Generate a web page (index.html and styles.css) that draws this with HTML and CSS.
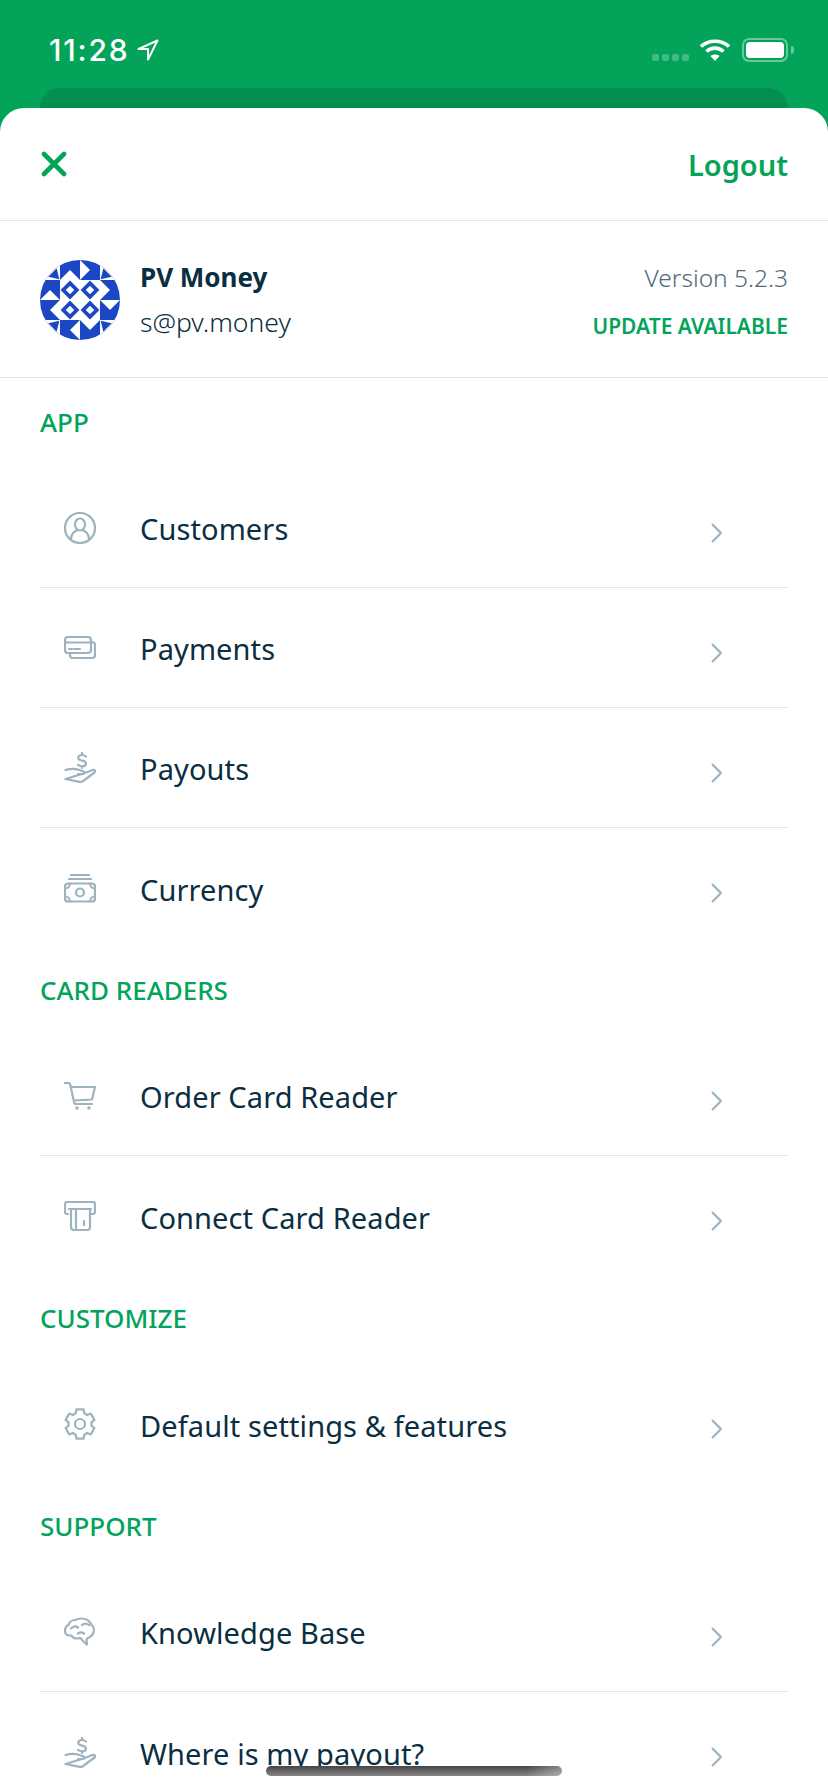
FILE: index.html
```html
<!DOCTYPE html>
<html lang="en">
<head>
  <meta charset="UTF-8" />
  <meta name="viewport" content="width=device-width, initial-scale=1" />
  <title>Menu</title>
  <link rel="stylesheet" href="styles.css">
</head>
<body>

  <!-- status bar -->
  <div class="status">
    <div class="status-time">
      <span>11:28</span>
      <svg class="loc" width="22" height="22" viewBox="0 0 22 22"><path d="M20.500 1.500 1.500 10h9.500v10.500z" fill="none" stroke="#fff" stroke-width="2" stroke-linejoin="round"/></svg>
    </div>
    <div class="status-right">
      <div class="signal"><i></i><i></i><i></i><i></i></div>
      <svg class="wifi" width="32" height="24" viewBox="0 0 32 24">
        <path d="M2 8.500C9.500 1.500 22.500 1.500 30 8.500" fill="none" stroke="#fff" stroke-width="3.600"/>
        <path d="M7.500 13.500c5-4.500 12-4.500 17 0" fill="none" stroke="#fff" stroke-width="3.600"/>
        <path d="M11.500 18c2.700-2 6.300-2 9 0L16 23z" fill="#fff"/>
      </svg>
      <div class="battery"><div class="battery-fill"></div></div>
      <div class="battery-tip"></div>
    </div>
  </div>
  <div class="peek"></div>

  <div class="sheet">
    <div class="sheet-top">
      <svg class="close" width="26" height="26" viewBox="0 0 26 26"><path d="M3 3l20 20M23 3 3 23" stroke="#03a45a" stroke-width="4.600" stroke-linecap="round"/></svg>
      <a class="logout">Logout</a>
    </div>

    <div class="profile">
      <svg class="avatar" width="80" height="80" viewBox="0 0 240 240">
        <defs>
          <clipPath id="round"><circle cx="120" cy="120" r="120"/></clipPath>
          <g id="quad">
            <rect x="0" y="0" width="60" height="60" fill="#fff"/>
            <path d="M50 25l8 33-33-8z" fill="#1b47c4"/>
            <path d="M60 60l30-30 30 30z" fill="#fff"/>
            <path d="M120 0l30 30-30 30z" fill="#fff"/>
            <rect x="60" y="60" width="60" height="60" fill="#fff"/>
            <path d="M90 69.500l20.500 20.500-20.500 20.500-20.500-20.500z" fill="none" stroke="#1b47c4" stroke-width="11"/>
          </g>
        </defs>
        <g clip-path="url(#round)">
          <rect width="240" height="240" fill="#1b47c4"/>
          <use href="#quad"/>
          <use href="#quad" transform="rotate(90 120 120)"/>
          <use href="#quad" transform="rotate(180 120 120)"/>
          <use href="#quad" transform="rotate(270 120 120)"/>
        </g>
      </svg>
      <div class="profile-info">
        <div class="profile-name">PV Money</div>
        <div class="profile-mail">s@pv.money</div>
      </div>
      <div class="profile-version">
        <div class="version">Version 5.2.3</div>
        <div class="update">UPDATE AVAILABLE</div>
      </div>
    </div>

    <div class="section-title">APP</div>
    <div class="list">
      <div class="row">
        <svg class="icon" width="32" height="32" viewBox="0 0 32 32"><circle cx="16" cy="16" r="15"/><ellipse cx="16" cy="12.500" rx="5" ry="6"/><path d="M7 27c0-5 3-7.500 6.500-9M25 27c0-5-3-7.500-6.500-9"/></svg>
        <span class="row-label">Customers</span>
        <svg class="chev" width="11" height="20" viewBox="0 0 11 20"><path d="M1 1l9 9-9 9"/></svg>
      </div>
      <div class="row">
        <svg class="icon" width="32" height="23" viewBox="0 0 32 23"><rect x="1" y="1" width="26" height="16" rx="3"/><path d="M1 6.500h26M5 13h3M10 13h6M27 6h1a3 3 0 0 1 3 3v10a3 3 0 0 1-3 3H9a3 3 0 0 1-3-3v-2"/></svg>
        <span class="row-label">Payments</span>
        <svg class="chev" width="11" height="20" viewBox="0 0 11 20"><path d="M1 1l9 9-9 9"/></svg>
      </div>
      <div class="row">
        <svg class="icon" width="32" height="31" viewBox="0 0 32 31"><path d="M22 4.500c-1-1-2.300-1.500-4-1.500-2.300 0-3.800 1-3.800 2.800S15.700 8.200 18 8.600s4 1.100 4 2.900-1.500 2.800-4 2.800c-1.700 0-3-.5-4-1.500M18 0v3M18 14v2"/><path d="M1.500 18c5-1.500 10-1.500 14 0l4 1.500c1.500.7 1 2.500-.5 2.500h-5M19.500 21.500l9-3.500c2-.8 3.500 1 2 2.500L18.500 29.500c-1 .5-2 .5-3 .3L1.500 27z"/></svg>
        <span class="row-label">Payouts</span>
        <svg class="chev" width="11" height="20" viewBox="0 0 11 20"><path d="M1 1l9 9-9 9"/></svg>
      </div>
      <div class="row row-last">
        <svg class="icon" width="32" height="29" viewBox="0 0 32 29"><path d="M7 1h18M5 5h22"/><rect x="1" y="9.500" width="30" height="18" rx="3"/><circle cx="16" cy="18.500" r="4"/><path d="M1 14.500a5 5 0 0 0 5-5M26 9.500a5 5 0 0 0 5 5M1 22.500a5 5 0 0 1 5 5M31 22.500a5 5 0 0 0-5 5"/></svg>
        <span class="row-label">Currency</span>
        <svg class="chev" width="11" height="20" viewBox="0 0 11 20"><path d="M1 1l9 9-9 9"/></svg>
      </div>
    </div>

    <div class="section-title">CARD READERS</div>
    <div class="list">
      <div class="row">
        <svg class="icon" width="32" height="28" viewBox="0 0 32 28"><path d="M0 1h4c1.200 0 2 .6 2.300 1.700L10 20c.2 1.300 1 2 2 2h16M6.500 5H31l-3 12.500-18 1"/><circle class="dot" cx="13" cy="26" r="1.800"/><circle class="dot" cx="25" cy="26" r="1.800"/></svg>
        <span class="row-label">Order Card Reader</span>
        <svg class="chev" width="11" height="20" viewBox="0 0 11 20"><path d="M1 1l9 9-9 9"/></svg>
      </div>
      <div class="row row-last">
        <svg class="icon" width="32" height="30" viewBox="0 0 32 30"><path d="M4 13H3a2 2 0 0 1-2-2V3a2 2 0 0 1 2-2h26a2 2 0 0 1 2 2v8a2 2 0 0 1-2 2h-2M5 8h22M7 8v18a3 3 0 0 0 3 3h13a3 3 0 0 0 3-3V8M12 8v21M20 20v4"/></svg>
        <span class="row-label">Connect Card Reader</span>
        <svg class="chev" width="11" height="20" viewBox="0 0 11 20"><path d="M1 1l9 9-9 9"/></svg>
      </div>
    </div>

    <div class="section-title">CUSTOMIZE</div>
    <div class="list">
      <div class="row row-last">
        <svg class="icon" width="32" height="32" viewBox="0 0 32 32"><polygon points="11.690,5.340 12.370,1.450 19.630,1.450 20.310,5.340 23.080,6.940 26.790,5.580 30.420,11.870 27.390,14.400 27.390,17.600 30.420,20.130 26.790,26.420 23.080,25.060 20.310,26.660 19.630,30.550 12.370,30.550 11.690,26.660 8.920,25.060 5.210,26.420 1.580,20.130 4.610,17.600 4.610,14.400 1.580,11.870 5.210,5.580 8.920,6.940"/><circle cx="16" cy="16" r="5"/></svg>
        <span class="row-label">Default settings &amp; features</span>
        <svg class="chev" width="11" height="20" viewBox="0 0 11 20"><path d="M1 1l9 9-9 9"/></svg>
      </div>
    </div>

    <div class="section-title">SUPPORT</div>
    <div class="list">
      <div class="row">
        <svg class="icon" width="32" height="30" viewBox="0 0 32 30"><path d="M23 21.500c4-1.500 7-4.500 7-9 0-2-1-3.500-2.500-4.500C26 4 22 1.500 17 1.500c-2.500 0-4 .5-5.500 1.500C8 3 5 5 4.500 8 2 9 1 11 1 13.500c0 3 2 5 5 5h1.500c1 2 3 3 5 3 2 0 3-.5 4-.5l3.500 4c1 1 2 2 3 2.500.5-1-.5-2.500-.5-3.500z"/><path d="M7 11.500c2-2.500 5-2.500 7-1M18 8c2-1.500 5-1.500 7 0M14 16.500c2-1.500 4-1.500 6 0"/></svg>
        <span class="row-label">Knowledge Base</span>
        <svg class="chev" width="11" height="20" viewBox="0 0 11 20"><path d="M1 1l9 9-9 9"/></svg>
      </div>
      <div class="row row-last">
        <svg class="icon" width="32" height="31" viewBox="0 0 32 31"><path d="M22 4.500c-1-1-2.300-1.500-4-1.500-2.300 0-3.800 1-3.800 2.800S15.700 8.200 18 8.600s4 1.100 4 2.900-1.500 2.800-4 2.800c-1.700 0-3-.5-4-1.500M18 0v3M18 14v2"/><path d="M1.500 18c5-1.500 10-1.500 14 0l4 1.500c1.500.7 1 2.500-.5 2.500h-5M19.500 21.500l9-3.500c2-.8 3.500 1 2 2.500L18.500 29.500c-1 .5-2 .5-3 .3L1.500 27z"/></svg>
        <span class="row-label">Where is my payout?</span>
        <svg class="chev" width="11" height="20" viewBox="0 0 11 20"><path d="M1 1l9 9-9 9"/></svg>
      </div>
    </div>
  </div>

  <div class="home-bar"></div>

</body>
</html>
```

FILE: styles.css
```css
html, body {
  margin: 0;
  padding: 0;
}

body {
  position: relative;
  width: 828px;
  height: 1792px;
  overflow: hidden;
  background: #03a45a;
  color: #0b2e42;
  font-family: "Noto Sans", "Open Sans", sans-serif;
}

.status {
  height: 88px;
  padding: 12px 34px 0 49px;
  box-sizing: border-box;
  display: flex;
  justify-content: space-between;
  align-items: center;
  color: white;
}

.status-time {
  display: flex;
  align-items: center;
  gap: 8px;
  font-family: Inter, sans-serif;
  font-size: 30px;
  font-weight: 500;
  letter-spacing: 1.8px;
}

.status-right {
  display: flex;
  align-items: center;
}

.signal {
  display: flex;
  gap: 3px;
  margin: 15px 10px 0 0;
}

.signal i {
  width: 7px;
  height: 7px;
  border-radius: 2px;
  background: rgba(255,255,255,0.25);
}

.wifi {
  margin-right: 11px;
}

.battery {
  width: 46px;
  height: 24px;
  box-sizing: border-box;
  padding: 2px;
  border: 2px solid rgba(255,255,255,0.4);
  border-radius: 7px;
}

.battery-fill {
  height: 100%;
  background: white;
  border-radius: 4px;
}

.battery-tip {
  width: 3px;
  height: 8px;
  margin-left: 3px;
  background: rgba(255,255,255,0.4);
  border-radius: 0 3px 3px 0;
}

.peek {
  height: 20px;
  margin: 0 40px;
  background: #028f50;
  border-radius: 20px 20px 0 0;
}

.sheet {
  height: 1684px;
  background: white;
  border-radius: 24px 24px 0 0;
}

.sheet-top {
  height: 113px;
  box-sizing: border-box;
  padding: 0 40px;
  display: flex;
  justify-content: space-between;
  align-items: center;
  border-bottom: 1px solid #e1e6e9;
}

.close {
  margin-left: 1px;
}

.logout {
  font-size: 29px;
  font-weight: 600;
  color: #03a45a;
}

.profile {
  height: 157px;
  box-sizing: border-box;
  margin-bottom: 2px;
  padding: 2px 40px 0;
  display: flex;
  align-items: center;
  border-bottom: 1px solid #e1e6e9;
}

.avatar {
  margin-right: 20px;
}

.profile-name {
  font-size: 26px;
  font-weight: 700;
  margin-top: -2px;
  margin-bottom: 9px;
}

.profile-mail {
  font-size: 26.5px;
  font-weight: 300;
}

.profile-version {
  margin-left: auto;
  text-align: right;
}

.version {
  font-size: 24.5px;
  font-weight: 300;
  color: #4f6a7a;
  margin-bottom: 18px;
}

.update {
  font-size: 21px;
  font-weight: 600;
  color: #03a45a;
}

.section-title {
  height: 88px;
  box-sizing: border-box;
  padding: 0 0 4px 40px;
  display: flex;
  align-items: center;
  font-size: 26px;
  font-weight: 500;
  color: #03a45a;
}

.list {
  margin: 0 40px;
}

.row {
  height: 120px;
  box-sizing: border-box;
  display: flex;
  align-items: center;
  border-bottom: 1px solid #e3e6e8;
}

.row-last {
  border-bottom: none;
}

.icon {
  flex: none;
  margin-left: 24px;
  fill: none;
  stroke: #9fb3bf;
  stroke-width: 2.2;
  stroke-linecap: round;
  stroke-linejoin: round;
}

.icon .dot {
  fill: #9fb3bf;
  stroke: none;
}

.row-label {
  margin-left: 44px;
  padding-top: 2px;
  font-size: 29px;
  letter-spacing: 0.1px;
}

.chev {
  margin: 10px 66px 0 auto;
  fill: none;
  stroke: #9fb3bf;
  stroke-width: 2.2;
}

.home-bar {
  position: absolute;
  left: 266px;
  top: 1766px;
  width: 296px;
  height: 10px;
  border-radius: 5px;
  background: linear-gradient(90deg, transparent 88%, rgba(255,255,255,0.35)), linear-gradient(#444, #888);
}
```
